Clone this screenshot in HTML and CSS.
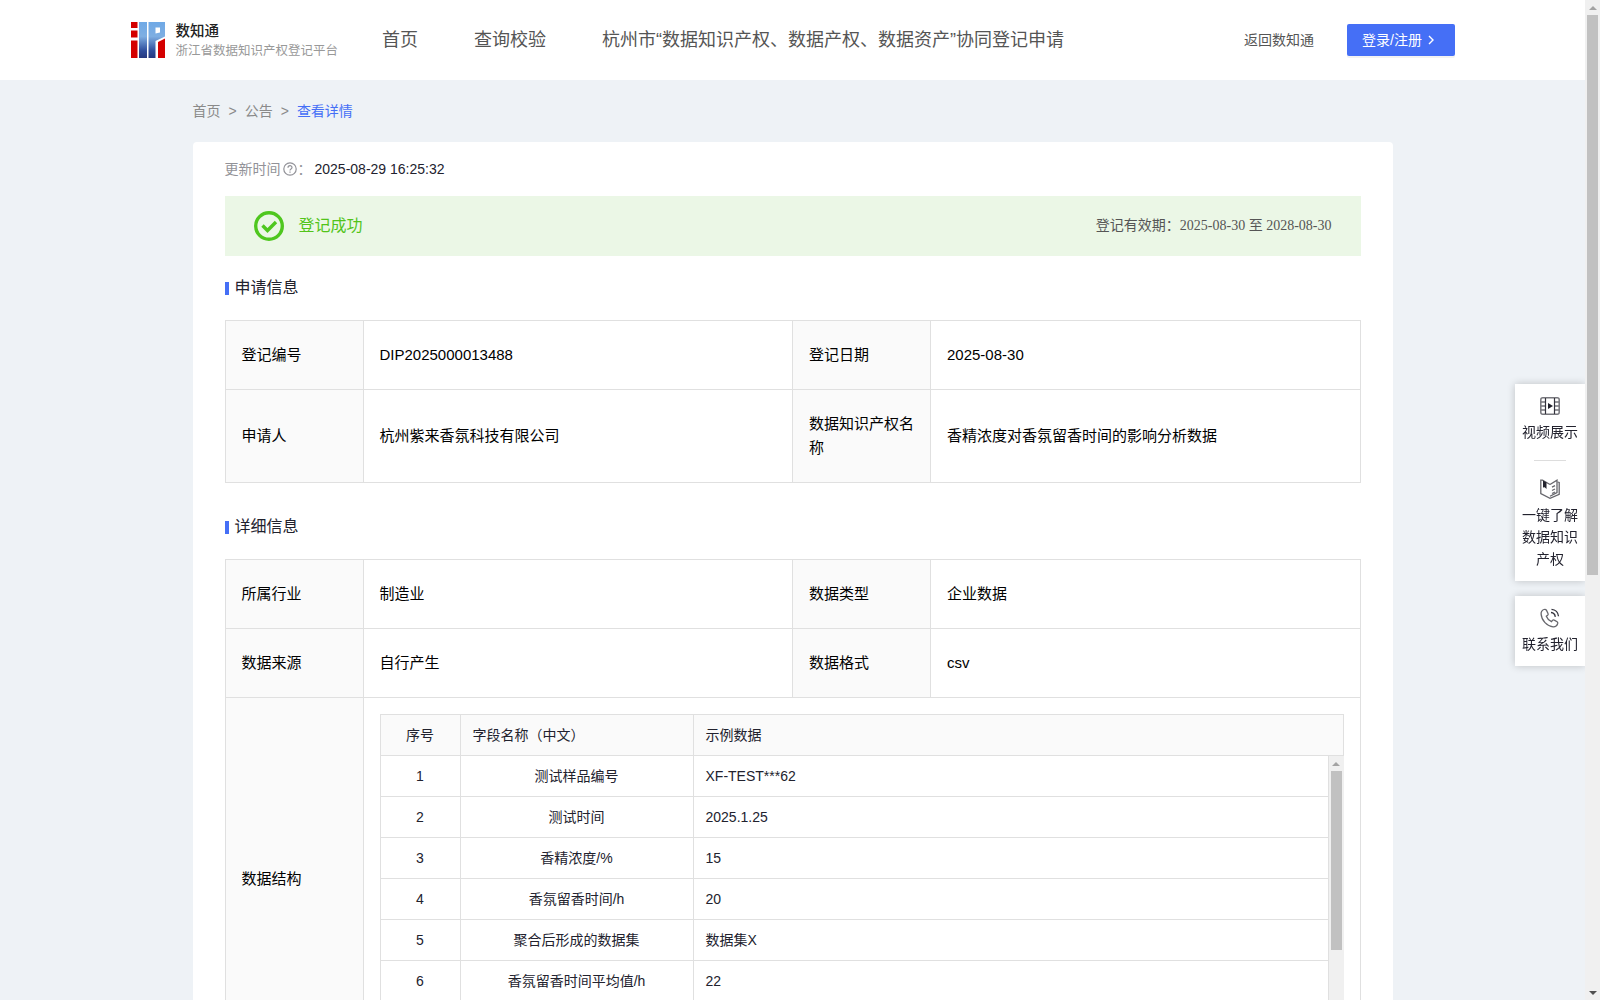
FILE: index.html
```html
<!DOCTYPE html>
<html lang="zh-CN">
<head>
  <meta charset="UTF-8">
  <meta name="viewport" content="width=device-width, initial-scale=1">
  <title>数知通 - 浙江省数据知识产权登记平台</title>
  <link rel="stylesheet" href="styles.css">
</head>
<body>

  <div class="app">
    <div class="page">
      <!-- Header -->
      <header class="header">
        <svg class="logo" viewBox="0 0 424 76" role="img" aria-label="数知通">
          <defs>
            <linearGradient id="logoBlue" x1="0" y1="0" x2="0" y2="1">
              <stop offset="0" stop-color="#6fa9e6"/>
              <stop offset="0.4" stop-color="#7eaee2"/>
              <stop offset="0.8" stop-color="#2f4d9c"/>
              <stop offset="1" stop-color="#26387f"/>
            </linearGradient>
          </defs>
          <path fill="#d40000" d="M0 2h13v12H0zM0 19h13v14H0zM0 39h13v35H0zM54 42l14-7v39H54z"/>
          <path fill="url(#logoBlue)" fill-rule="evenodd" d="M16 2h16v72H16zM35 2h33v29L49 40v34H35zM49 13v12l9-2V13z"/>
          <text class="logo-name" x="89" y="30">数知通</text>
          <text class="logo-sub" x="89" y="67">浙江省数据知识产权登记平台</text>
        </svg>
        <nav class="nav">
          <a href="#">首页</a>
          <a href="#">查询校验</a>
          <a href="#">杭州市“数据知识产权、数据产权、数据资产”协同登记申请</a>
        </nav>
        <a class="back-link" href="#">返回数知通</a>
        <button class="login-btn" type="button">登录/注册
          <svg width="14" height="14" viewBox="0 0 14 14"><path d="M5 3l4 4-4 4" fill="none" stroke="#fff" stroke-width="1.4"/></svg>
        </button>
      </header>

      <main class="container">
        <nav class="breadcrumb">
          <a href="#">首页</a><span>&gt;</span><a href="#">公告</a><span>&gt;</span><a class="current" href="#">查看详情</a>
        </nav>

        <div class="card">
          <div class="update-time">
            <span class="label">更新时间</span>
            <svg width="14" height="14" viewBox="0 0 14 14"><circle cx="7" cy="7" r="6.2" fill="none" stroke="#929298" stroke-width="1.2"/><path d="M5 5.7C5 3 9 3 9 5.5 9 7 7 6.8 7 8.4M7 9.4v1.3" fill="none" stroke="#929298" stroke-width="1.2"/></svg>
            <span class="label">：</span>
            <span class="value">2025-08-29 16:25:32</span>
          </div>

          <div class="banner">
            <svg width="30" height="30" viewBox="0 0 30 30"><circle cx="15" cy="15" r="13.3" fill="none" stroke="#4fc71f" stroke-width="3.4"/><path d="M8.5 14.5l5 5 8.500-8.500" fill="none" stroke="#4fc71f" stroke-width="3.4"/></svg>
            <span class="banner-status">登记成功</span>
            <span class="banner-date">登记有效期：2025-08-30 至 2028-08-30</span>
          </div>

          <!-- Application info -->
          <h2 class="section-title">申请信息</h2>
          <table class="info-table">
            <colgroup><col class="col-label"><col><col class="col-label"><col></colgroup>
            <tr>
              <th>登记编号</th>
              <td>DIP2025000013488</td>
              <th>登记日期</th>
              <td>2025-08-30</td>
            </tr>
            <tr>
              <th>申请人</th>
              <td>杭州紫来香氛科技有限公司</td>
              <th>数据知识产权名称</th>
              <td>香精浓度对香氛留香时间的影响分析数据</td>
            </tr>
          </table>

          <!-- Detail info -->
          <h2 class="section-title">详细信息</h2>
          <table class="info-table">
            <colgroup><col class="col-label"><col><col class="col-label"><col></colgroup>
            <tr>
              <th>所属行业</th>
              <td>制造业</td>
              <th>数据类型</th>
              <td>企业数据</td>
            </tr>
            <tr>
              <th>数据来源</th>
              <td>自行产生</td>
              <th>数据格式</th>
              <td>csv</td>
            </tr>
            <tr>
              <th>数据结构</th>
              <td class="nested" colspan="3">
                <table class="field-table field-head">
                  <colgroup><col class="col-no"><col class="col-name"><col></colgroup>
                  <tr><th>序号</th><th>字段名称（中文）</th><th>示例数据</th></tr>
                </table>
                <div class="field-scroll">
                  <div class="field-view">
                    <table class="field-table">
                      <colgroup><col class="col-no"><col class="col-name"><col></colgroup>
                      <tr><td>1</td><td>测试样品编号</td><td>XF-TEST***62</td></tr>
                      <tr><td>2</td><td>测试时间</td><td>2025.1.25</td></tr>
                      <tr><td>3</td><td>香精浓度/%</td><td>15</td></tr>
                      <tr><td>4</td><td>香氛留香时间/h</td><td>20</td></tr>
                      <tr><td>5</td><td>聚合后形成的数据集</td><td>数据集X</td></tr>
                      <tr><td>6</td><td>香氛留香时间平均值/h</td><td>22</td></tr>
                    </table>
                  </div>
                  <div class="scrollbar field-bar">
                    <span class="arrow up"></span>
                    <span class="thumb"></span>
                    <span class="arrow down"></span>
                  </div>
                </div>
              </td>
            </tr>
          </table>
        </div>
      </main>
    </div>

    <div class="scrollbar page-bar">
      <span class="arrow up"></span>
      <span class="thumb"></span>
      <span class="arrow down"></span>
    </div>
  </div>

  <!-- Floating side menu -->
  <aside class="side">
    <div class="side-box">
      <a class="side-item" href="#">
        <svg width="20" height="20" viewBox="0 0 20 20" fill="none" stroke="#77777d" stroke-width="1.5"><rect x="0.8" y="1.800" width="18.400" height="16.400" rx="2"/><path d="M1 6h4M1 10h4M1 14h4M15 6h4M15 10h4M15 14h4"/><path stroke="#33333c" stroke-width="1.2" d="M5.500 2v16M14.500 2v16"/><path d="M8 7l5 3-5 3z" fill="#22222c" stroke="none"/></svg>
        视频展示
      </a>
      <hr class="side-line">
      <a class="side-item" href="#">
        <svg width="20" height="20" viewBox="0 0 20 20" fill="none" stroke="#66666c" stroke-width="1.300"><path d="M10 5.500L2.500 1.200H.8v13.500L10 19.300l9.200-4V3.500L17.500 3"/><path d="M10 5.500l7-4.300v12.300L10 17.300M12 8.200l3-1.500M12 11.500l3-1.500M12 14.500l3-1.500"/><path d="M3 1.500l3.500 2V10L4.700 8.300 3 8.500z" fill="#22222c" stroke="none"/></svg>
        一键了解数据知识产权
      </a>
    </div>
    <div class="side-box">
      <a class="side-item" href="#">
        <svg width="20" height="20" viewBox="0 0 20 20" fill="none" stroke="#66666c" stroke-width="1.300"><path d="M4 1.500C2 2.200 1 4 1.100 6c.4 6.500 6 12.300 12 12.800 2 .1 4-1.400 4.600-3.300.2-.7 0-1.300-.6-1.700l-2.800-1.700c-.6-.4-1.400-.2-1.900.3l-.9 1.200c-2.500-1-4.300-3-5.200-5.300l1.300-1c.6-.5.7-1.200.4-1.900L6.400 2.100C6 1.500 5 1.200 4 1.500z"/><path stroke="#33333c" d="M11 4.500c2.500.2 4 2 4.300 4.300M11.500 1.300c4 .2 6.700 3.200 7 7"/></svg>
        联系我们
      </a>
    </div>
  </aside>

</body>
</html>
```
FILE: styles.css
```css
* {
  box-sizing: border-box;
}

body {
  margin: 0;
  font-family: "Liberation Sans", "Noto Sans CJK SC", sans-serif;
  font-size: 14px;
  line-height: 22px;
  color: #22222e;
  background: #eef2f6;
}

a {
  color: inherit;
  text-decoration: none;
}

.app {
  display: flex;
  height: 100vh;
  overflow: hidden;
}

.page {
  flex: 1;
  min-width: 0;
  overflow: hidden;
}

/* Header */
.header {
  display: flex;
  align-items: center;
  height: 80px;
  padding: 0 130px;
  background: #fff;
  color: #555;
}

.logo {
  width: 212px;
  height: 38px;
  margin-left: 1px;
  flex: none;
}

.logo-name {
  font-size: 29px;
  font-weight: 500;
  fill: #222;
}

.logo-sub {
  font-size: 25px;
  fill: #999;
}

.nav {
  display: flex;
  gap: 56px;
  margin-left: 39px;
  font-size: 18px;
  white-space: nowrap;
}

.back-link {
  margin-left: auto;
  white-space: nowrap;
}

.login-btn {
  display: flex;
  align-items: center;
  gap: 2px;
  width: 108px;
  height: 32px;
  margin-left: 33px;
  padding: 0 15px;
  border: 0;
  border-radius: 2px;
  background: #456ff6;
  box-shadow: 0 2px 0 rgba(0, 0, 0, 0.05);
  color: #fff;
  font: inherit;
  white-space: nowrap;
}

/* Content */
.container {
  max-width: 1200px;
  margin: 0 auto;
}

.breadcrumb {
  display: flex;
  gap: 8px;
  padding: 20px 0;
  color: #8a8a8a;
}

.breadcrumb .current {
  color: #456ff6;
}

.card {
  padding: 16px 32px;
  border-radius: 4px;
  background: #fff;
}

.update-time {
  display: flex;
  align-items: center;
}

.update-time svg {
  margin: 0 1px 0 2px;
}

.update-time .label {
  color: #929298;
}

.update-time .value {
  margin-left: 3px;
}

.banner {
  display: flex;
  align-items: center;
  height: 60px;
  margin-top: 16px;
  padding: 0 29px;
  background: #ebf7e6;
}

.banner-status {
  margin-left: 15px;
  font-size: 16px;
  color: #52c41a;
}

.banner-date {
  margin-left: auto;
  font-family: "Liberation Serif", "Noto Sans CJK SC", serif;
  color: #555;
}

.section-title {
  display: flex;
  align-items: center;
  gap: 6px;
  margin: 20px 0;
  font-size: 16px;
  font-weight: 400;
  line-height: 24px;
}

.section-title::before {
  content: "";
  width: 4px;
  height: 13px;
  background: #456ff6;
}

.info-table + .section-title {
  margin-top: 32px;
}

/* Tables */
.info-table,
.field-table {
  width: 100%;
  table-layout: fixed;
  border-spacing: 0;
  border-left: 1px solid #e0e0e0;
}

.info-table {
  border-top: 1px solid #e0e0e0;
  font-size: 15px;
  line-height: 24px;
  color: #000;
}

.info-table th,
.info-table td {
  padding: 22px 16px;
  border-right: 1px solid #e0e0e0;
  border-bottom: 1px solid #e0e0e0;
  font-weight: 400;
  text-align: left;
}

.info-table th {
  background: #fafafa;
}

.info-table .nested {
  padding: 16px;
}

.col-label {
  width: 138px;
}

.col-no {
  width: 80px;
}

.col-name {
  width: 233px;
}

.field-table {
  font-size: 14px;
  line-height: 22px;
  color: #22222e;
}

.field-head {
  border-top: 1px solid #e0e0e0;
}

.info-table .field-table th,
.info-table .field-table td {
  padding: 9px 12px;
}

.info-table .field-table th:first-child,
.info-table .field-table td:first-child,
.info-table .field-table td:nth-child(2) {
  text-align: center;
}

.field-scroll {
  display: flex;
  height: 288px;
}

.field-view {
  flex: 1;
  overflow: hidden;
}

/* Scrollbars */
.scrollbar {
  display: flex;
  flex-direction: column;
  align-items: center;
  flex: none;
  width: 15px;
  background: #f0f0f0;
}

.arrow {
  display: flex;
  justify-content: center;
  align-items: center;
  height: 15px;
}

.arrow::before {
  content: "";
  border: 4px solid transparent;
  border-top-width: 0;
  border-bottom: 4px solid #a3a3a3;
}

.arrow.down {
  margin-top: auto;
}

.arrow.down::before {
  border-top: 4px solid #505050;
  border-bottom-width: 0;
}

.thumb {
  width: 11px;
  background: #c1c1c1;
}

.page-bar .thumb {
  height: 56%;
}

.field-bar .thumb {
  height: 62%;
}

/* Side menu */
.side {
  position: fixed;
  top: 384px;
  right: 15px;
  display: flex;
  flex-direction: column;
  gap: 15px;
  width: 70px;
}

.side-box {
  padding: 12px 7px 11px;
  background: #fff;
  box-shadow: 0 0 8px rgba(0, 0, 0, 0.2);
  clip-path: inset(-10px 0 -10px -10px);
}

.side-item {
  display: flex;
  flex-direction: column;
  align-items: center;
  gap: 5px;
  text-align: center;
}

.side-line {
  width: 32px;
  margin: 17px auto 18px;
  border: 0;
  border-top: 1px solid #ddd;
}
```
